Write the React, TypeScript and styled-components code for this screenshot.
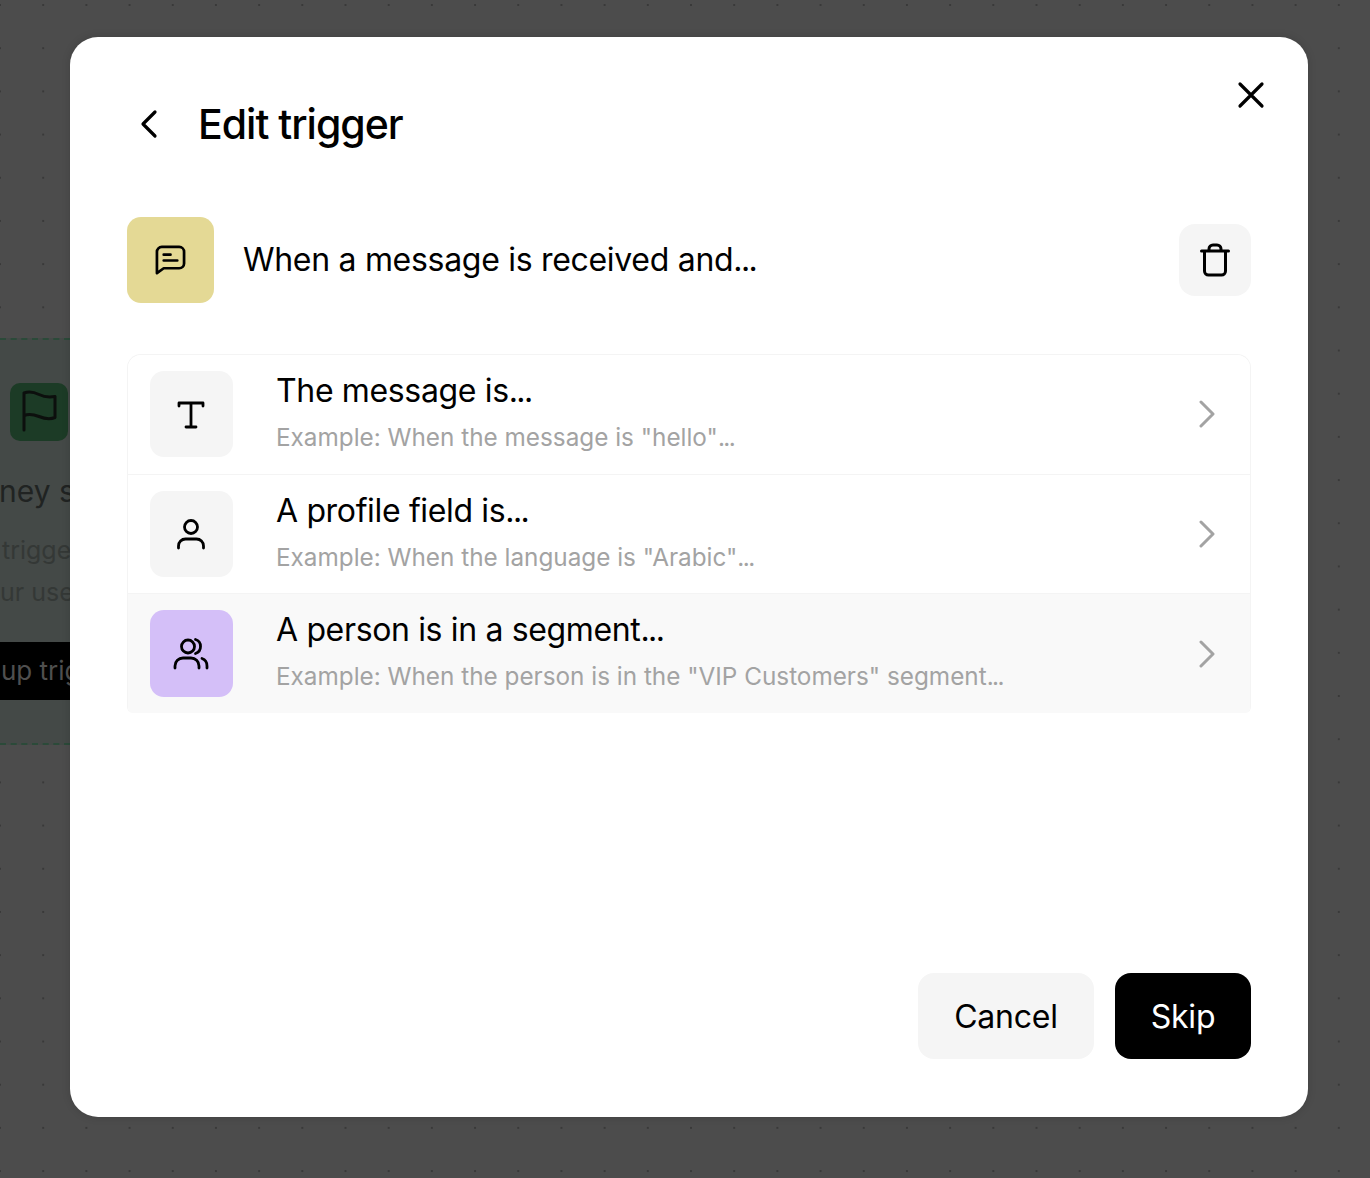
import React from "react";
import styled, { createGlobalStyle } from "styled-components";

const Global = createGlobalStyle`
  html, body { margin: 0; padding: 0; }
  body { font-family: "Inter", "Liberation Sans", sans-serif; color: #000; }
`;

const Page = styled.div`
  position: relative;
  width: 1370px;
  height: 1178px;
  overflow: hidden;
  background-color: #4c4c4c;
  background-image: radial-gradient(circle, #393939 0.9px, transparent 1.3px);
  background-size: 43.2px 43.2px;
  background-position: -21.6px -16.6px;
  padding-top: 338px;
  box-sizing: border-box;
`;

const JourneyCard = styled.div`
  width: 70px;
  height: 407px;
  box-sizing: border-box;
  background: #444947;
  border-top: 2px dashed #2b4a39;
  border-bottom: 2px dashed #2b4a39;
  overflow: hidden;
  white-space: nowrap;
  padding-top: 43px;
  display: flex;
  flex-direction: column;
`;

const FlagTile = styled.div`
  width: 58px;
  height: 58px;
  margin-left: 10px;
  border-radius: 10px;
  background: #1c3b26;
  display: flex;
  align-items: center;
  justify-content: center;
  flex: none;
`;

const CardTitle = styled.div`
  font-size: 30px;
  line-height: 40px;
  color: #202322;
  margin: 30px 0 0 -1px;
`;

const CardText = styled.div<{ $indent: number }>`
  font-size: 25px;
  line-height: 42px;
  color: #343836;
  padding-left: ${(p) => p.$indent}px;
`;

const CardTextGroup = styled.div`
  margin-top: 18px;
`;

const CardButton = styled.div`
  height: 58px;
  margin-top: 29px;
  padding-left: 1px;
  background: #000;
  color: #4f4f4f;
  font-size: 26px;
  line-height: 58px;
  flex: none;
`;

const Modal = styled.div`
  position: absolute;
  left: 70px;
  top: 37px;
  width: 1238px;
  height: 1080px;
  box-sizing: border-box;
  padding: 57px 57px 58px;
  background: #fff;
  border-radius: 28px;
  box-shadow: 0 0 8px rgba(0, 0, 0, 0.15);
  display: flex;
  flex-direction: column;
`;

const CloseButton = styled.button`
  position: absolute;
  top: 42.5px;
  right: 42px;
  width: 30px;
  height: 30px;
  padding: 0;
  border: 0;
  background: none;
  display: flex;
`;

const Header = styled.div`
  display: flex;
  align-items: center;
  height: 60px;
  padding-left: 10px;
  gap: 28px;
`;

const BackButton = styled.span`
  width: 24px;
  height: 32px;
  display: flex;
  align-items: center;
  justify-content: center;
`;

const Title = styled.h1`
  margin: 0 0 0 9px;
  font-size: 41px;
  line-height: 58px;
  font-weight: 450;
  letter-spacing: -1px;
`;

const TriggerRow = styled.div`
  display: flex;
  align-items: center;
  margin-top: 63px;
  height: 86px;
`;

const Tile = styled.div<{ $bg: string; $w?: number; $h?: number; $inset?: number }>`
  width: ${(p) => p.$w ?? 83}px;
  height: ${(p) => p.$h ?? 86}px;
  border-radius: 14px;
  background: ${(p) => p.$bg};
  box-sizing: border-box;
  padding-right: ${(p) => p.$inset ?? 1}px;
  flex: none;
  display: flex;
  align-items: center;
  justify-content: center;
`;

const Dots = styled.span`
  letter-spacing: -1.6px;
`;

const TriggerText = styled.div`
  flex: 1;
  margin-left: 29px;
  font-size: 32px;
  line-height: 40px;
  letter-spacing: -0.3px;
`;

const TrashButton = styled.button`
  width: 72px;
  height: 72px;
  border: 0;
  padding: 0;
  border-radius: 16px;
  background: #f5f5f5;
  display: flex;
  align-items: center;
  justify-content: center;
`;

const List = styled.div`
  margin-top: 51px;
  border: 1px solid #f4f4f4;
  border-bottom: 0;
  border-radius: 14px 14px 6px 6px;
  overflow: hidden;
  display: flex;
  flex-direction: column;
`;

const Row = styled.div<{ $active?: boolean }>`
  height: ${(p) => (p.$active ? 120 : 119)}px;
  box-sizing: border-box;
  display: flex;
  align-items: center;
  padding: 0 34px 0 22px;
  background: ${(p) => (p.$active ? "#f9f9f9" : "#fff")};
  & + & { border-top: 1px solid #f4f4f4; }
  &:first-child { padding-bottom: 1px; }
`;

const RowText = styled.div`
  flex: 1;
  margin: 0 0 5px 43px;
  display: flex;
  flex-direction: column;
  gap: 10px;
`;

const RowTitle = styled.div`
  font-size: 32px;
  line-height: 40px;
  letter-spacing: -0.35px;
`;

const RowDesc = styled.div`
  font-size: 24.3px;
  line-height: 32px;
  color: #a3a3a3;
`;

const Footer = styled.div`
  margin-top: auto;
  display: flex;
  justify-content: flex-end;
  gap: 21px;
`;

const Button = styled.button<{ $primary?: boolean }>`
  height: 86px;
  width: ${(p) => (p.$primary ? 136 : 176)}px;
  border: 0;
  padding: 0;
  border-radius: 16px;
  font-family: inherit;
  font-size: 32px;
  letter-spacing: -0.2px;
  background: ${(p) => (p.$primary ? "#000" : "#f5f5f5")};
  color: ${(p) => (p.$primary ? "#fff" : "#000")};
`;

const S = { fill: "none", stroke: "currentColor", strokeLinecap: "round", strokeLinejoin: "round" } as const;

const Chevron = ({ color = "#a3a3a3" }: { color?: string }) => (
  <svg width="18" height="28" viewBox="0 0 18 28" style={{ color }}>
    <path d="M3 2l12 12L3 26" {...S} strokeWidth="3" />
  </svg>
);

const rows = [
  {
    title: "The message is",
    desc: 'Example: When the message is "hello"',
    bg: "#f5f5f5",
    icon: (
      <svg width="32" height="32" viewBox="0 0 32 32">
        <path d="M4 8V5h24V8M16 5v24M11 29h10" {...S} strokeWidth="2.800" />
      </svg>
    ),
  },
  {
    title: "A profile field is",
    desc: 'Example: When the language is "Arabic"',
    bg: "#f5f5f5",
    icon: (
      <svg width="32" height="32" viewBox="0 0 32 32">
        <circle cx="16" cy="9" r="6.500" {...S} strokeWidth="2.800" />
        <path d="M3.500 30v-2a7 7 0 0 1 7-7h11a7 7 0 0 1 7 7v2" {...S} strokeWidth="2.800" />
      </svg>
    ),
  },
  {
    title: "A person is in a segment",
    desc: 'Example: When the person is in the "VIP Customers" segment',
    bg: "#d4bff8",
    active: true,
    h: 87,
    icon: (
      <svg width="36" height="34" viewBox="0 0 36 34">
        <circle cx="15" cy="9.500" r="6.500" {...S} strokeWidth="2.800" />
        <path d="M2 31v-2a8 8 0 0 1 8-8h8a8 8 0 0 1 8 8v2M22.500 2.500c3 .8 5 3.600 5 7s-2 6-5 7M29 21.500c3 1 5 3.800 5 7.500v2" {...S} strokeWidth="2.800" />
      </svg>
    ),
  },
];

export default function App() {
  return (
    <>
      <Global />
      <Page>
        <JourneyCard>
          <FlagTile>
            <svg width="36" height="48" viewBox="0 0 36 48" color="#0c0f0d">
              <path d="M3 42V5c5-2 10-1 15 1.500s10 3 16 2v21c-5 2-11 1-16-1s-10-3-15-1" {...S} strokeWidth="3" />
            </svg>
          </FlagTile>
          <CardTitle>ney st</CardTitle>
          <CardTextGroup>
            <CardText $indent={2}>trigger</CardText>
            <CardText $indent={0}>ur user</CardText>
          </CardTextGroup>
          <CardButton>up trigger</CardButton>
        </JourneyCard>
        <Modal>
          <CloseButton aria-label="Close">
            <svg width="30" height="30" viewBox="0 0 30 30">
              <path d="M4 4l22 22M26 4L4 26" {...S} strokeWidth="3.200" />
            </svg>
          </CloseButton>
          <Header>
            <BackButton>
              <svg width="18" height="30" viewBox="0 0 18 30">
                <path d="M15 3L3 15l12 12" {...S} strokeWidth="3.200" />
              </svg>
            </BackButton>
            <Title>Edit trigger</Title>
          </Header>
          <TriggerRow>
            <Tile $bg="#e4d995" $w={87} $inset={0}>
              <svg width="31" height="31" viewBox="0 0 32 32">
                <path d="M2 29V7a5 5 0 0 1 5-5h18a5 5 0 0 1 5 5v12a5 5 0 0 1-5 5H9z" {...S} strokeWidth="2.800" />
                <path d="M9 10h7M9 16h14" {...S} strokeWidth="2.800" />
              </svg>
            </Tile>
            <TriggerText>When a message is received and<Dots>...</Dots></TriggerText>
            <TrashButton aria-label="Delete">
              <svg width="30" height="34" viewBox="0 0 30 34">
                <path d="M1.500 8h27M4.500 8v20a4 4 0 0 0 4 4h13a4 4 0 0 0 4-4V8M9 8V6a4 4 0 0 1 4-4h4a4 4 0 0 1 4 4v2" {...S} strokeWidth="3" />
              </svg>
            </TrashButton>
          </TriggerRow>
          <List>
            {rows.map((r) => (
              <Row key={r.title} $active={r.active}>
                <Tile $bg={r.bg} $h={r.h}>{r.icon}</Tile>
                <RowText>
                  <RowTitle>{r.title}<Dots>...</Dots></RowTitle>
                  <RowDesc>{r.desc}<Dots>...</Dots></RowDesc>
                </RowText>
                <Chevron />
              </Row>
            ))}
          </List>
          <Footer>
            <Button>Cancel</Button>
            <Button $primary>Skip</Button>
          </Footer>
        </Modal>
      </Page>
    </>
  );
}
